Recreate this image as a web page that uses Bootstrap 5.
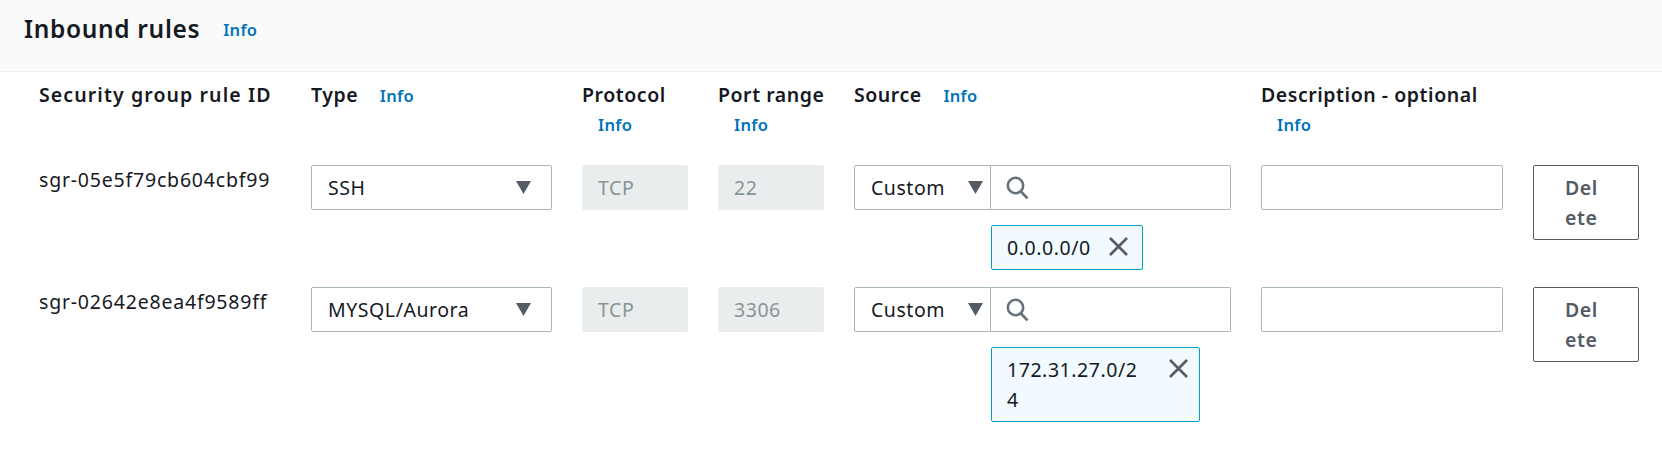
<!DOCTYPE html>
<html lang="en">
<head>
<meta charset="utf-8">
<title>Inbound rules</title>
<link href="https://cdn.jsdelivr.net/npm/bootstrap@5.3.0/dist/css/bootstrap.min.css" rel="stylesheet">
<style>
html,body{height:100%;background:#fff;}
body{font-family:"Noto Sans","Open Sans",sans-serif;font-size:19.5px;letter-spacing:.55px;line-height:30px;color:#16191f;overflow:hidden;}
.panel-head{height:72px;background:#fafafa;border-bottom:1px solid #eaeded;padding:13px 24px 0;gap:23px;}
.panel-title{font-size:24.5px;font-weight:600;line-height:32px;margin:0;color:#16191f;letter-spacing:.65px;}
.info-link{color:#0073bb;font-size:16.5px;font-weight:600;text-decoration:none;line-height:30px;letter-spacing:.3px;}
.panel-head .info-link{margin-top:2px;}
.rule-grid{display:grid;grid-template-columns:242px 241px 106px 106px 377px 242px 106px;column-gap:30px;padding:8px 0 0 39px;}
.col-label{font-weight:600;line-height:30px;min-height:85px;white-space:nowrap;}
.col-label .info-link{margin-left:16px;}
.col-label .stack-info{display:block;}
.wide-label{letter-spacing:1.1px;}
.rule-id{letter-spacing:.8px;}
.rule-cell{margin-bottom:17px;}
.ctl{height:45px;width:100%;border:1px solid #aab7b8;border-radius:2px;background-color:#fff;font-size:19.5px;letter-spacing:.55px;color:#16191f;padding:0 16px;box-shadow:none;}
.type-select{background-image:url("data:image/svg+xml,%3Csvg xmlns='http://www.w3.org/2000/svg' viewBox='0 0 15 13'%3E%3Cpath d='M0 0h15L7.5 13z' fill='%23545b64'/%3E%3C/svg%3E");background-size:15px 13px;background-position:right 20px center;background-repeat:no-repeat;}
.src-select{width:137px;flex:none;border-radius:2px 0 0 2px;background-position:right 7px center;padding-right:24px;}
.src-search{flex:1;width:auto;border-left:0;border-radius:0 2px 2px 0;padding:0 15px;}
.ctl-off{height:45px;background:#eaeded;border-radius:2px;color:#879596;padding:0 16px;line-height:45px;}
.ip-token{background:#f1faff;border:1px solid #00a1c9;border-radius:2px;margin:15px 0 0 137px;padding:7px 10px 6px 15px;line-height:30px;}
.token-one{width:152px;padding-right:13px;}
.token-two{width:209px;}
.token-text{word-break:break-all;}
.token-two .token-text{width:140px;}
.token-x{flex:none;}
.del-btn{width:106px;padding:7px 36px 6px 31px;background:#fff;border:1px solid #545b64;border-radius:2px;color:#545b64;font-weight:600;font-size:19.5px;letter-spacing:.55px;line-height:30px;word-break:break-all;text-align:left;}
</style>
</head>
<body>
<div class="panel-head d-flex align-items-start">
  <h2 class="panel-title">Inbound rules</h2>
  <a class="info-link" href="#">Info</a>
</div>
<div class="rule-grid">
  <div class="col-label wide-label">Security group rule ID</div>
  <div class="col-label">Type <a class="info-link" href="#">Info</a></div>
  <div class="col-label">Protocol <a class="info-link stack-info" href="#">Info</a></div>
  <div class="col-label">Port range <a class="info-link stack-info" href="#">Info</a></div>
  <div class="col-label">Source <a class="info-link" href="#">Info</a></div>
  <div class="col-label">Description - optional <a class="info-link stack-info" href="#">Info</a></div>
  <div class="col-label"></div>

  <div class="rule-id">sgr-05e5f79cb604cbf99</div>
  <div><select class="ctl type-select form-select" aria-label="Type"><option>SSH</option></select></div>
  <div class="ctl-off">TCP</div>
  <div class="ctl-off">22</div>
  <div class="rule-cell">
    <div class="d-flex">
      <select class="ctl type-select src-select form-select" aria-label="Source"><option>Custom</option></select>
      <div class="ctl src-search d-flex align-items-center">
        <svg width="23" height="23" viewBox="0 0 23 23" fill="none" stroke="#687078" stroke-width="2.6"><circle cx="9.5" cy="9.5" r="7.7"/><path d="M15 15.5l6.5 7"/></svg>
      </div>
    </div>
    <div class="ip-token token-one d-flex justify-content-between align-items-start">
      <span class="token-text">0.0.0.0/0</span>
      <svg class="token-x mt-1" width="21" height="19" viewBox="0 0 21 19" fill="none" stroke="#545b64" stroke-width="2.6"><path d="M2 1l17 17M19 1L2 18"/></svg>
    </div>
  </div>
  <div><input class="ctl form-control" type="text" aria-label="Description"></div>
  <div><button class="del-btn btn" type="button">Delete</button></div>

  <div class="rule-id">sgr-02642e8ea4f9589ff</div>
  <div><select class="ctl type-select form-select" aria-label="Type"><option>MYSQL/Aurora</option></select></div>
  <div class="ctl-off">TCP</div>
  <div class="ctl-off">3306</div>
  <div class="rule-cell">
    <div class="d-flex">
      <select class="ctl type-select src-select form-select" aria-label="Source"><option>Custom</option></select>
      <div class="ctl src-search d-flex align-items-center">
        <svg width="23" height="23" viewBox="0 0 23 23" fill="none" stroke="#687078" stroke-width="2.6"><circle cx="9.5" cy="9.5" r="7.7"/><path d="M15 15.5l6.5 7"/></svg>
      </div>
    </div>
    <div class="ip-token token-two d-flex justify-content-between align-items-start">
      <span class="token-text">172.31.27.0/24</span>
      <svg class="token-x mt-1" width="21" height="19" viewBox="0 0 21 19" fill="none" stroke="#545b64" stroke-width="2.6"><path d="M2 1l17 17M19 1L2 18"/></svg>
    </div>
  </div>
  <div><input class="ctl form-control" type="text" aria-label="Description"></div>
  <div><button class="del-btn btn" type="button">Delete</button></div>
</div>
</body>
</html>
